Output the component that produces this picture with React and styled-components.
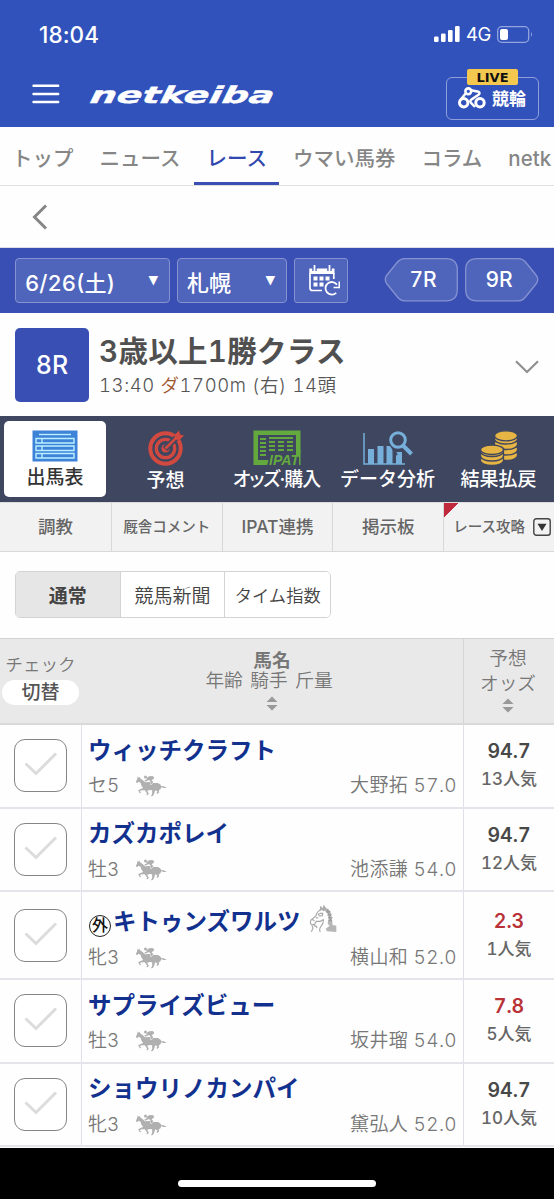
import React from "react";
import styled, { createGlobalStyle } from "styled-components";

const tabs = [
    { label: "出馬表", icon: <ListIcon />, active: true },
    { label: "予想", icon: <TargetIcon />, drop: 3 },
    { label: "オッズ·購入", icon: <IpatIcon />, drop: 1, tight: true },
    { label: "データ分析", icon: <ChartIcon />, drop: 1 },
    { label: "結果払戻", icon: <CoinsIcon /> },
];

const horses = [
    { name: "ウィッチクラフト", age: "セ5", jockey: "大野拓 57.0", odds: "94.7", rank: "13人気" },
    { name: "カズカポレイ", age: "牡3", jockey: "池添謙 54.0", odds: "94.7", rank: "12人気" },
    { name: "キトゥンズワルツ", age: "牝3", jockey: "横山和 52.0", odds: "2.3", rank: "1人気", foreign: true, hot: true },
    { name: "サプライズビュー", age: "牡3", jockey: "坂井瑠 54.0", odds: "7.8", rank: "5人気", hot: true },
    { name: "ショウリノカンパイ", age: "牝3", jockey: "黛弘人 52.0", odds: "94.7", rank: "10人気" },
];

export default function App() {
    return (
        <Page>
            <GlobalStyle />
            <Header>
                <StatusBar>
                    <Clock>18:04</Clock>
                    <SignalIcon />
                    <Carrier>4G</Carrier>
                    <BatteryIcon />
                </StatusBar>
                <Brand>
                    <MenuIcon />
                    <Logo />
                    <LiveButton>
                        <LiveTag>LIVE</LiveTag>
                        <BikeIcon />
                        <span>競輪</span>
                    </LiveButton>
                </Brand>
            </Header>
            <Nav>
                <NavItem>トップ</NavItem>
                <NavItem>ニュース</NavItem>
                <NavItem $active>レース</NavItem>
                <NavItem>ウマい馬券</NavItem>
                <NavItem>コラム</NavItem>
                <NavItem>netk</NavItem>
            </Nav>
            <BackRow>
                <svg width="16" height="26" viewBox="0 0 16 26" fill="none" stroke="#868686" strokeWidth="3">
                    <path d="M14 1.500L2.500 13L14 24.500" />
                </svg>
            </BackRow>
            <RaceBar>
                <Select $width={155}>
                    <span>6/26(土)</span>
                    <Caret>▼</Caret>
                </Select>
                <Select $width={110}>
                    <span>札幌</span>
                    <Caret>▼</Caret>
                </Select>
                <CalendarButton>
                    <CalendarIcon />
                </CalendarButton>
                <RaceLink>
                    <RaceShape />
                    <RaceLabel>7R</RaceLabel>
                </RaceLink>
                <RaceLink $next>
                    <RaceShape $flip />
                    <RaceLabel>9R</RaceLabel>
                </RaceLink>
            </RaceBar>
            <RaceInfo>
                <RaceNumber>8R</RaceNumber>
                <RaceText>
                    <RaceTitle>3歳以上1勝クラス</RaceTitle>
                    <RaceMeta>
                        13:40 <Dirt>ダ</Dirt>1700m (右) 14頭
                    </RaceMeta>
                </RaceText>
                <svg width="24" height="14" viewBox="0 0 24 14" fill="none" stroke="#909090" strokeWidth="2.200">
                    <path d="M1 1.200L12 12L23 1.200" />
                </svg>
            </RaceInfo>
            <Tabs>
                {tabs.map((tab) => (
                    <Tab key={tab.label} $active={tab.active}>
                        {tab.icon}
                        <TabLabel $drop={tab.drop} $tight={tab.tight}>
                            {tab.label}
                        </TabLabel>
                    </Tab>
                ))}
            </Tabs>
            <SubTabs>
                <SubTab>調教</SubTab>
                <SubTab $small>厩舎コメント</SubTab>
                <SubTab>IPAT連携</SubTab>
                <SubTab>掲示板</SubTab>
                <SubTab $small $flag>
                    レース攻略
                    <DropIcon />
                </SubTab>
            </SubTabs>
            <SegmentRow>
                <Segment $active>通常</Segment>
                <Segment>競馬新聞</Segment>
                <Segment $small>タイム指数</Segment>
            </SegmentRow>
            <TableHead>
                <CheckHead>
                    <span>チェック</span>
                    <Toggle>切替</Toggle>
                </CheckHead>
                <NameHead>
                    <b>馬名</b>
                    <span>年齢 騎手 斤量</span>
                    <SortIcon />
                </NameHead>
                <OddsHead>
                    <span>予想</span>
                    <span>オッズ</span>
                    <SortIcon />
                </OddsHead>
            </TableHead>
            {horses.map((horse) => (
                <Row key={horse.name} $tall={horse.foreign}>
                    <CheckCell>
                        <Checkbox>
                            <svg width="34" height="24" viewBox="0 0 34 24" fill="none" stroke="#dcdcdc" strokeWidth="3">
                                <path d="M1.500 11.500L12 21.500L32 1.500" />
                            </svg>
                        </Checkbox>
                    </CheckCell>
                    <HorseCell>
                        <NameLine $tall={horse.foreign}>
                            {horse.foreign && <Foreign>外</Foreign>}
                            <HorseName>{horse.name}</HorseName>
                            {horse.foreign && <KnightIcon />}
                        </NameLine>
                        <DetailLine>
                            <Age>{horse.age}</Age>
                            <JockeyIcon />
                            <Jockey>{horse.jockey}</Jockey>
                        </DetailLine>
                    </HorseCell>
                    <OddsCell>
                        <Odds $hot={horse.hot}>{horse.odds}</Odds>
                        <Rank>{horse.rank}</Rank>
                    </OddsCell>
                </Row>
            ))}
            <BottomBar>
                <HomeIndicator />
            </BottomBar>
        </Page>
    );
}

function SignalIcon() {
    return (
        <svg width="26" height="16" viewBox="0 0 26 16" fill="#fff">
            <rect x="0" y="10.500" width="4.600" height="5.500" rx="1.200" />
            <rect x="7" y="7.500" width="4.600" height="8.500" rx="1.200" />
            <rect x="14" y="4" width="4.600" height="12" rx="1.200" />
            <rect x="21" y="0" width="4.600" height="16" rx="1.200" />
        </svg>
    );
}

function BatteryIcon() {
    return (
        <svg width="37" height="17" viewBox="0 0 37 17">
            <rect x="0.700" y="0.700" width="31" height="15.600" rx="4" fill="none" stroke="#94a5de" strokeWidth="1.300" />
            <rect x="3" y="3" width="8" height="11" rx="2" fill="#fff" />
            <path d="M34 6Q36 8.500 34 11Z" fill="#94a5de" />
        </svg>
    );
}

function MenuIcon() {
    return (
        <svg width="28" height="20" viewBox="0 0 28 20" stroke="#fff" strokeWidth="2.400" strokeLinecap="round">
            <path d="M1.500 1.800H26.200M1.500 10H26.200M1.500 18H26.200" />
        </svg>
    );
}

function Logo() {
    return (
        <LogoSvg width="190" height="28" viewBox="0 0 190 28">
            <text x="1" y="22" textLength="184" lengthAdjust="spacingAndGlyphs" transform="translate(4 0) skewX(-10)">
                netkeiba
            </text>
        </LogoSvg>
    );
}

function BikeIcon() {
    return (
        <svg width="28" height="22" viewBox="0 0 28 22" fill="none" stroke="#fff" strokeWidth="3">
            <circle cx="5.700" cy="15.700" r="4.200" />
            <circle cx="22" cy="15.700" r="4.200" />
            <circle cx="10.300" cy="4.300" r="2.900" strokeWidth="2.600" />
            <path d="M2.800 12.500L8 6M13 3.200L20.500 4.800Q22.500 6 20.500 7.700L13.500 12.500Q11.500 14 13 15.800L17 20" strokeWidth="2.500" />
        </svg>
    );
}

function CalendarIcon() {
    return (
        <svg width="32" height="32" viewBox="0 0 32 32" fill="none" stroke="#fff">
            <path d="M1.300 3.500H26.500V9H1.300Z" fill="#fff" stroke="none" />
            <path d="M2 8V23Q2 25.500 4.500 25.500H14M25.800 8V14" strokeWidth="1.700" />
            <path d="M6.500 1V6M21.500 1V6" stroke="#4f64bb" strokeWidth="4.500" />
            <path d="M6.500 0.500V6M21.500 0.500V6" strokeWidth="1.800" strokeLinecap="round" />
            <path
                d="M5.500 11.500h4v4h-4zM11.500 11.500h4v4h-4zM17.500 11.500h4v4h-4zM5.500 17.500h4v4h-4zM11.500 17.500h4v4h-4z"
                fill="#fff"
                stroke="none"
            />
            <path d="M28.200 27.800A6.300 6.300 0 1 1 29 19.800" strokeWidth="1.800" />
            <path d="M31.300 16.500V22.500H25.500" strokeWidth="1.600" />
        </svg>
    );
}

function RaceShape({ $flip }) {
    return (
        <ShapeSvg $flip={$flip} width="74" height="44" viewBox="0 0 74 44">
            <path
                d="M20.500 0.700H62Q73.300 0.700 73.300 12V31.500Q73.300 42.800 62 42.800H20.500Q16.500 42.800 13.500 39L3 26Q-0.500 21.500 3 17L13.500 4Q16.500 0.700 20.500 0.700Z"
                fill="#4f64bb"
                stroke="#8593d2"
                strokeWidth="1.300"
            />
        </ShapeSvg>
    );
}

function ListIcon() {
    return (
        <svg width="46" height="32" viewBox="0 0 46 32">
            <rect x="0.500" y="0.500" width="45" height="31" fill="#3f83d9" />
            <g fill="none" stroke="#b9efff" strokeWidth="1.400">
                <path d="M7 4.500H39" />
                <path d="M4 8.500H42V13H4ZM4 16H42V20.500H4ZM4 23.500H42V28H4ZM10 8.500V13M10 16V20.500M10 23.500V28" />
            </g>
        </svg>
    );
}

function TargetIcon() {
    return (
        <svg width="36" height="36" viewBox="0 0 36 36" fill="none" stroke="#d2493f">
            <circle cx="17.500" cy="18.500" r="15.200" strokeWidth="4" />
            <circle cx="17.500" cy="18.500" r="9.200" strokeWidth="3.300" />
            <circle cx="17.500" cy="18.500" r="4" fill="#d2493f" stroke="none" />
            <path d="M17 19L32 4" stroke="#3f465f" strokeWidth="6" />
            <path d="M17.500 18.500L30 6" strokeWidth="2.600" />
            <path d="M26.500 9.500V5L31 0.500L32 4.500L36 5.500L31.500 10Z" fill="#d2493f" stroke="none" />
        </svg>
    );
}

function IpatIcon() {
    return (
        <svg width="48" height="36" viewBox="0 0 48 36">
            <path d="M0.500 0.500H47.500V35H0.500ZM5 5V30H43V5Z" fill="#63a93e" fillRule="evenodd" />
            <path
                d="M7 9H13M7 13H13M7 17H13M7 21H13M7 25H13M16 12H22M16 16H22M16 20H22M25 12H31M25 16H31M25 20H31M34 12H40M34 16H40M34 20H40M16 8H40"
                stroke="#63a93e"
                strokeWidth="2"
            />
            <path d="M17 23.500H48V36H14Z" fill="#3f465f" />
            <path d="M43 20H47.500V35H46V25H43Z" fill="#63a93e" />
            <IpatText x="16" y="34.500" textLength="30" lengthAdjust="spacingAndGlyphs">
                IPAT
            </IpatText>
        </svg>
    );
}

function ChartIcon() {
    return (
        <svg width="50" height="36" viewBox="0 0 50 36" fill="none" stroke="#76afd9">
            <path d="M1 3V34H42" strokeWidth="1.500" />
            <path d="M8 34V19M17.500 34V16M26.500 34V16M36 34V22" strokeWidth="6" />
            <circle cx="35" cy="10" r="10" fill="#3f465f" stroke="none" />
            <path d="M27 14L34 25" stroke="#3f465f" strokeWidth="2" />
            <circle cx="35" cy="10" r="7.300" strokeWidth="3" />
            <path d="M40 15.500L48.500 24" strokeWidth="4" />
        </svg>
    );
}

function CoinsIcon() {
    const right = [24.500, 19, 13.500, 8];
    const left = [29.500, 25, 20.500];
    return (
        <svg width="38" height="36" viewBox="0 0 38 36" fill="#e6b544" stroke="#3f465f" strokeWidth="1.300">
            {right.map((y) => (
                <path key={y} d={`M14.500 ${y - 2}V${y + 1}A11.500 5 0 0 0 37.500 ${y + 1}V${y - 2}Z`} />
            ))}
            <ellipse cx="26" cy="5.800" rx="11.500" ry="5" />
            {left.map((y) => (
                <path key={y} d={`M0.500 ${y - 2}V${y + 1}A11.500 5 0 0 0 23.500 ${y + 1}V${y - 2}Z`} />
            ))}
            <ellipse cx="12" cy="19.800" rx="11.500" ry="4.700" />
        </svg>
    );
}

function DropIcon() {
    return (
        <svg width="18" height="18" viewBox="0 0 18 18">
            <rect x="0.800" y="0.800" width="16.400" height="16.400" rx="2.500" fill="none" stroke="#444" strokeWidth="1.400" />
            <path d="M4.500 5.700H13.500L9 13Z" fill="#333" />
        </svg>
    );
}

function SortIcon() {
    return (
        <svg width="12" height="15" viewBox="0 0 12 15" fill="#999">
            <path d="M0.500 6L6 0.500L11.500 6ZM0.500 9L6 14.500L11.500 9Z" />
        </svg>
    );
}

function JockeyIcon() {
    return (
        <svg width="32" height="22" viewBox="0 0 95 66" fill="#b0b0b0">
            <path d="M2 21L6 12L8 4L10 8L13 5L15 10L21 14L30 22L44 21L58 24L68 24Q76 26 79 34L86 34L95 39L86 39L78 37L76 43L71 46L72 52L67 57L64 54L67 49L60 46L57 56L53 63L47 64L51 57L51 46L44 45L36 47L41 56L37 61L33 60L36 56L29 46L20 46L14 48L18 54L14 55L9 46L18 41L24 39L19 32L16 23L10 20L6 25Z" />
            <path
                d="M34 9L42 4L52 3L57 7L55 13L49 15L54 21L50 28L46 28L47 22L42 15L36 17L31 20L27 17L34 14Z"
                stroke="#fefefe"
                strokeWidth="2.500"
                paintOrder="stroke"
            />
            <circle cx="31" cy="6" r="4.500" />
        </svg>
    );
}

function KnightIcon() {
    return (
        <svg width="29" height="30" viewBox="0 0 87 90" fill="none" stroke="#aaa" strokeWidth="3.500">
            <path d="M32 18L34 7L41 13L45 4L51 12Q68 17 68 42L71 63L82 65V84L54 82L50 74L62 65L56 60L59 42L56 29L48 21Z" fill="#b6b6b6" stroke="none" />
            <path d="M35 17Q23 23 21 35L6 48Q2 56 7 62L16 62L22 52L34 52L43 47Q44 57 36 67Q29 76 34 84" />
            <path d="M8 47Q14 46 16 51M20 41L28 42M35 28L28 31L31 36L40 35L41 28ZM9 65L12 73L7 83M14 65L22 67L24 72M34 19L36 9L43 18L45 7L50 17" />
            <path d="M57 16L53 25L63 22L56 34L67 32L58 42L70 41L59 50L70 51" stroke="#888" strokeWidth="2" />
        </svg>
    );
}

const GlobalStyle = createGlobalStyle`
    * {
        box-sizing: border-box;
    }

    body {
        margin: 0;
        background: #fff;
        font-family: "Inter", "Noto Sans CJK JP", sans-serif;
        font-variant-numeric: tabular-nums;
        color: #555;
    }

    svg {
        display: block;
        flex: none;
    }
`;

const Page = styled.div`
    width: 554px;
    height: 1199px;
    display: flex;
    flex-direction: column;
    overflow: hidden;
    white-space: nowrap;
    background: #fefefe;
`;

const Header = styled.header`
    height: 127px;
    flex: none;
    background: #3152bb;
    color: #fff;
`;

const StatusBar = styled.div`
    display: flex;
    align-items: center;
    height: 68px;
    padding: 0 20px 0 39px;
`;

const Clock = styled.span`
    flex: 1;
    font-size: 22.5px;
    font-weight: 500;
    font-variant-numeric: normal;
    letter-spacing: 0.1px;
`;

const Carrier = styled.span`
    width: 37px;
    padding-left: 6px;
    font-size: 18.5px;
    letter-spacing: -0.5px;
`;

const Brand = styled.div`
    display: flex;
    align-items: flex-start;
    padding: 9px 15px 0 32px;

    > svg:first-child {
        margin-top: 7px;
    }
`;

const LogoSvg = styled.svg`
    margin: 4px auto 0 28px;
    fill: #fff;
    stroke: #fff;
    stroke-width: 0.4px;
    font-family: "DejaVu Sans", sans-serif;
    font-size: 23px;
    font-style: italic;
    font-weight: bold;
`;

const LiveButton = styled.button`
    position: relative;
    display: flex;
    align-items: center;
    gap: 6px;
    width: 93px;
    height: 43px;
    padding: 0 0 1px 11px;
    border: 1.4px solid #8f9fdb;
    border-radius: 6px;
    background: none;
    color: #fff;
    font-family: "Noto Sans CJK JP", sans-serif;
    font-size: 17px;
    font-weight: 700;

    span:last-child {
        margin-bottom: 2px;
    }
`;

const LiveTag = styled.span`
    position: absolute;
    top: -9px;
    left: 20px;
    width: 51px;
    height: 16px;
    border-radius: 2px;
    background: #f4c84f;
    color: #111;
    font: bold 13px/17px "DejaVu Sans", sans-serif;
    text-align: center;
`;

const Nav = styled.nav`
    display: flex;
    flex: none;
    height: 59px;
    margin-left: -1px;
    border-bottom: 1px solid #dedede;
`;

const NavItem = styled.a`
    height: 58px;
    padding: 0 12px;
    margin-right: 2px;
    border-bottom: 3px solid ${(props) => (props.$active ? "#3a4fb3" : "transparent")};
    color: ${(props) => (props.$active ? "#3149ae" : "#868686")};
    font-size: 20.5px;
    font-weight: 500;
    line-height: 63px;

    &:first-child {
        padding-left: 13px;
    }
`;

const BackRow = styled.div`
    display: flex;
    align-items: center;
    flex: none;
    height: 62px;
    padding-left: 32px;
    border-bottom: 1px solid #dcdcea;
`;

const RaceBar = styled.div`
    display: flex;
    align-items: flex-start;
    gap: 7px;
    flex: none;
    height: 65px;
    padding: 10px 15px;
    background: #3a4fb3;
    color: #fff;
`;

const Select = styled.div`
    display: flex;
    align-items: center;
    justify-content: space-between;
    width: ${(props) => props.$width}px;
    height: 45px;
    padding: 1px 11px 0 9px;
    border: 1.3px solid #8593d2;
    border-radius: 4px;
    background: #4f64bb;
    font-size: 22px;
    font-weight: 500;
`;

const Caret = styled.span`
    padding-bottom: 4px;
    font-family: "DejaVu Sans", sans-serif;
    font-size: 12.5px;
`;

const CalendarButton = styled.button`
    display: flex;
    width: 54px;
    height: 45px;
    padding: 6px 0 0 13px;
    border: 1.3px solid #8593d2;
    border-radius: 3px;
    background: #4f64bb;
`;

const RaceLink = styled.a`
    display: grid;
    width: 74px;
    height: 44px;
    margin-left: ${(props) => (props.$next ? 0 : "auto")};
`;

const ShapeSvg = styled.svg`
    grid-area: 1 / 1;
    transform: ${(props) => (props.$flip ? "scaleX(-1)" : "none")};
`;

const RaceLabel = styled.span`
    grid-area: 1 / 1;
    z-index: 1;
    padding: 0 6px 0 10px;
    font-size: 21px;
    font-weight: 500;
    line-height: 43px;
    text-align: center;

    ${RaceLink}:last-child & {
        padding: 0 10px 0 4px;
    }
`;

const RaceInfo = styled.section`
    display: flex;
    align-items: center;
    flex: none;
    height: 103px;
    padding: 0 15px;

    > svg {
        margin: 4px 0 0 auto;
    }
`;

const RaceNumber = styled.div`
    width: 74px;
    height: 74px;
    border-radius: 5px;
    background: #3a4fb3;
    color: #fff;
    font-size: 25px;
    font-weight: 500;
    line-height: 74px;
    text-align: center;
`;

const RaceText = styled.div`
    padding: 2px 0 0 10px;
`;

const RaceTitle = styled.h1`
    margin: 0;
    color: #505050;
    font-size: 29.5px;
    font-weight: 600;
    letter-spacing: 0.3px;
    line-height: 38px;
`;

const RaceMeta = styled.div`
    font-size: 18.5px;
    font-weight: 350;
    letter-spacing: 0.6px;
    line-height: 30px;
`;

const Dirt = styled.span`
    color: #a0562c;
`;

const Tabs = styled.div`
    display: flex;
    flex: none;
    height: 86px;
    padding: 5px 0 5px 4px;
    background: #3f465f;
`;

const Tab = styled.div`
    display: flex;
    flex-direction: column;
    align-items: center;
    justify-content: space-between;
    width: ${(props) => (props.$active ? 102 : 111)}px;
    margin-right: ${(props) => (props.$active ? 4 : 0)}px;
    padding: 9px 0 5px;
    border-radius: 5px;
    background: ${(props) => (props.$active ? "#fff" : "none")};
    color: ${(props) => (props.$active ? "#333" : "#fff")};
`;

const TabLabel = styled.span`
    font-size: 19px;
    font-weight: 500;
    line-height: 28px;
    letter-spacing: ${(props) => (props.$tight ? "-1.1px" : "normal")};
    margin-bottom: ${(props) => -(props.$drop || 0)}px;
    font-feature-settings: ${(props) => (props.$tight ? '"palt"' : "normal")};
`;

const IpatText = styled.text`
    fill: #63a93e;
    font: italic bold 14px "Liberation Sans", sans-serif;
`;

const SubTabs = styled.div`
    display: flex;
    flex: none;
    height: 50px;
    border-top: 1px solid #ddd;
    border-bottom: 1px solid #d8d8d8;
    background: #f2f2f2;
`;

const SubTab = styled.div`
    display: flex;
    align-items: center;
    justify-content: center;
    gap: 8px;
    width: 111px;
    padding: 0 0 3px ${(props) => (props.$flag ? 6 : 0)}px;
    border-left: 1px solid #d8d8d8;
    background: ${(props) => (props.$flag ? "linear-gradient(135deg, #c0283b 10px, #f2f2f2 10.5px)" : "none")};
    color: #666;
    font-size: ${(props) => (props.$small ? 14.5 : 17.5)}px;
    font-weight: 500;

    &:first-child {
        border-left: none;
    }

    svg {
        margin-top: 2px;
    }
`;

const SegmentRow = styled.div`
    display: flex;
    flex: none;
    width: 316px;
    height: 47px;
    margin: 19px 0 20px 15px;
    overflow: hidden;
    border: 1px solid #d3d3d3;
    border-radius: 5px;
`;

const Segment = styled.button`
    width: 105px;
    padding: 0;
    border: none;
    border-right: 1px solid #d3d3d3;
    background: ${(props) => (props.$active ? "#e6e6e6" : "#fff")};
    color: #444;
    font-family: "Noto Sans CJK JP", sans-serif;
    font-size: ${(props) => (props.$small ? 17.3 : 19)}px;
    font-weight: ${(props) => (props.$active ? 600 : 350)};

    &:last-child {
        border-right: none;
    }
`;

const TableHead = styled.div`
    display: flex;
    flex: none;
    height: 87px;
    border-top: 1px solid #d3d3d3;
    border-bottom: 2px solid #d9d9d9;
    background: #e9e9e9;
    color: #777;
    font-size: 18.7px;
    font-weight: 350;
`;

const CheckHead = styled.div`
    width: 81px;
    padding: 12px 2px 0;
    font-size: 17.6px;
    line-height: 27px;
    text-align: center;
`;

const Toggle = styled.div`
    width: 77px;
    height: 25px;
    margin-top: 2px;
    border-radius: 13px;
    background: #fff;
    color: #555;
    font-size: 19px;
    font-weight: 500;
    line-height: 26px;
`;

const NameHead = styled.div`
    display: flex;
    flex-direction: column;
    align-items: center;
    width: 382px;
    padding-top: 12px;
    line-height: 20px;

    b {
        font-weight: 600;
    }

    span {
        margin-right: 6px;
        word-spacing: 2.5px;
    }

    svg {
        margin-top: 5px;
    }
`;

const OddsHead = styled.div`
    display: flex;
    flex-direction: column;
    align-items: center;
    flex: 1;
    padding: 7px 2px 0 0;
    border-left: 1px solid #d6d6d6;
    line-height: 25px;

    svg {
        margin-top: 2px;
    }
`;

const Row = styled.div`
    display: flex;
    flex: none;
    height: ${(props) => (props.$tall ? 88 : 83.6)}px;
    border-bottom: 2px solid #e4e4ea;
`;

const CheckCell = styled.div`
    display: flex;
    align-items: center;
    width: 81px;
    padding-left: 14px;
`;

const Checkbox = styled.div`
    display: flex;
    align-items: center;
    justify-content: center;
    width: 53px;
    height: 53px;
    border: 1.3px solid #858585;
    border-radius: 11px;
    background: #fff;
    padding-bottom: 3px;
`;

const HorseCell = styled.div`
    flex: 1;
    padding: 0 6px;
    border-left: 1.500px solid #e0e0e8;
`;

const NameLine = styled.div`
    display: flex;
    align-items: center;
    height: ${(props) => (props.$tall ? 51 : 46)}px;
    padding-top: ${(props) => (props.$tall ? 8 : 5)}px;

    svg {
        margin-top: -6px;
    }
`;

const Foreign = styled.span`
    width: 22px;
    height: 22px;
    margin: 8px 2px 0 1px;
    border: 1.5px solid #222;
    border-radius: 50%;
    color: #111;
    font-size: 16px;
    font-weight: 500;
    line-height: 19px;
    text-align: center;
`;

const HorseName = styled.span`
    margin-right: 8px;
    color: #12318f;
    font-size: 23.5px;
    font-weight: 600;
    line-height: 38px;
`;

const DetailLine = styled.div`
    display: flex;
    align-items: center;
    height: 30px;
    color: #777;
    font-size: 19px;
    font-weight: 350;
    line-height: 26px;
`;

const Age = styled.span`
    width: 47px;
`;

const Jockey = styled.span`
    margin-left: auto;
    letter-spacing: 0.35px;
`;

const OddsCell = styled.div`
    display: flex;
    flex-direction: column;
    align-items: center;
    width: 91px;
    justify-content: center;
    padding-bottom: 1px;
    border-left: 1.500px solid #e0e0e8;
    line-height: 28px;
`;

const Odds = styled.span`
    color: ${(props) => (props.$hot ? "#b83238" : "#484848")};
    font-size: 19.5px;
    font-weight: 600;
`;

const Rank = styled.span`
    color: #666;
    font-size: 17px;
    font-weight: 500;
`;

const BottomBar = styled.footer`
    display: flex;
    justify-content: center;
    flex: 1;
    margin-top: 1px;
    padding-top: 32px;
    background: #000;
`;

const HomeIndicator = styled.div`
    width: 198px;
    height: 7px;
    border-radius: 4px;
    background: #fff;
`;
